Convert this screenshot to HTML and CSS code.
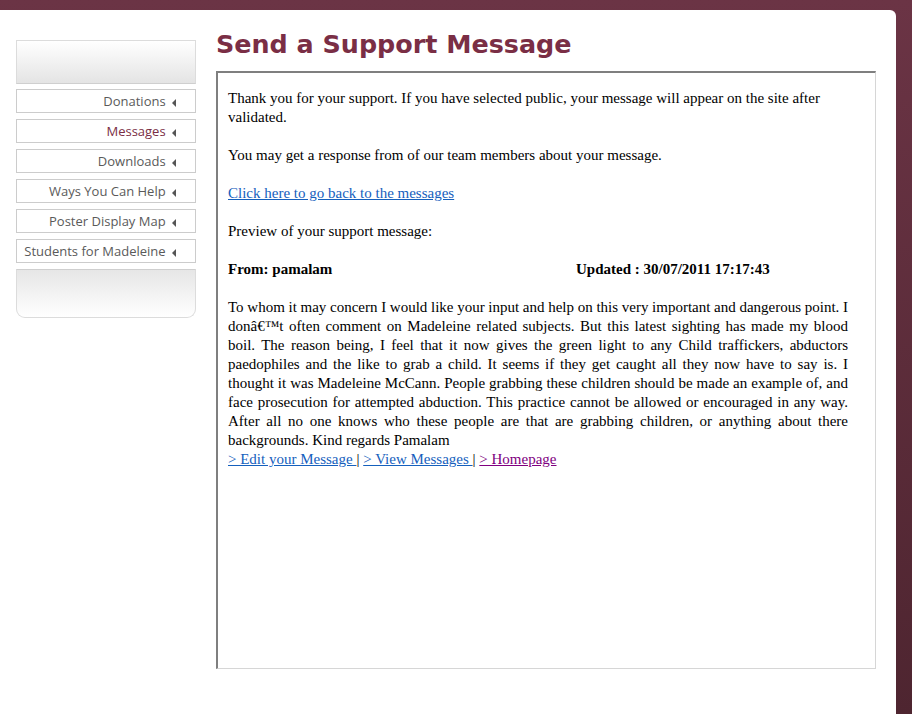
FILE: index.html
```html
<!DOCTYPE html>
<html lang="en">
<head>
    <meta charset="UTF-8">
    <title>Send a Support Message</title>
    <link rel="stylesheet" href="styles.css">
</head>
<body>
    <div class="page">
        <!-- Menu laterale -->
        <div class="sidebar">
            <div class="side-top"></div>
            <ul class="menu">
                <li><a href="#">Donations <span class="arrow"></span></a></li>
                <li><a href="#" class="current">Messages <span class="arrow"></span></a></li>
                <li><a href="#">Downloads <span class="arrow"></span></a></li>
                <li><a href="#">Ways You Can Help <span class="arrow"></span></a></li>
                <li><a href="#">Poster Display Map <span class="arrow"></span></a></li>
                <li><a href="#">Students for Madeleine <span class="arrow"></span></a></li>
            </ul>
            <div class="side-bottom"></div>
        </div>

        <!-- Contenuto -->
        <div class="content">
            <h1>Send a Support Message</h1>
            <div class="message-box">
                <p>Thank you for your support. If you have selected public, your message will appear on the site after validated.</p>
                <p>You may get a response from of our team members about your message.</p>
                <p><a href="#">Click here to go back to the messages</a></p>
                <p>Preview of your support message:</p>
                <div class="meta">
                    <span class="from">From: pamalam</span>
                    <span class="updated">Updated : 30/07/2011 17:17:43</span>
                </div>
                <p class="body-text"><span class="tight">To whom it may concern I would like your input and help on this very important and dangerous point. I</span> donâ€™t often comment on Madeleine related subjects. But this latest sighting has made my blood boil. The reason being, I feel that it now gives the green light to any Child traffickers, abductors paedophiles and the like to grab a child. It seems if they get caught all they now have to say is. I thought it was Madeleine McCann. People grabbing these children should be made an example of, and face prosecution for attempted abduction. This practice cannot be allowed or encouraged in any way. After all no one knows who these people are that are grabbing children, or anything about there backgrounds. Kind regards Pamalam</p>
                <div class="links">
                    <a href="#">&gt; Edit your Message </a> |
                    <a href="#">&gt; View Messages </a> |
                    <a href="#" class="visited">&gt; Homepage</a>
                </div>
            </div>
        </div>
    </div>
</body>
</html>
```

FILE: styles.css
```css
body {
    margin: 0;
    padding: 0;
    background: linear-gradient(to bottom, #6b3445, #4e2530);
    height: 714px;
    overflow: hidden;
}
.page {
    margin-top: 10px;
    width: 896px;
    height: 704px;
    background-color: #fff;
    border-top-right-radius: 6px;
    display: flex;
}
.sidebar {
    width: 180px;
    margin-left: 16px;
    padding-top: 30px;
}
.side-top {
    height: 42px;
    border: 1px solid #dcdcdc;
    border-bottom-color: #cfcfcf;
    background: linear-gradient(to bottom, #fff, #e4e4e4);
}
.menu {
    list-style: none;
    margin: 5px 0 0 0;
    padding: 0;
}
.menu li {
    margin-bottom: 6px;
}
.menu a {
    display: block;
    height: 22px;
    line-height: 22px;
    border: 1px solid #cccccc;
    padding-right: 19px;
    text-align: right;
    font-family: "Open Sans", sans-serif;
    font-size: 13px;
    color: #5a5a5a;
    text-decoration: none;
}
.menu a.current {
    color: #7a2e45;
}
.arrow {
    display: inline-block;
    width: 0;
    height: 0;
    margin-left: 3px;
    border-top: 4px solid transparent;
    border-bottom: 4px solid transparent;
    border-right: 4px solid #555;
    vertical-align: -1px;
}
.side-bottom {
    height: 47px;
    border: 1px solid #dcdcdc;
    border-top-color: #cfcfcf;
    border-radius: 0 0 9px 9px;
    background: linear-gradient(to bottom, #e6e6e6, #fff);
}
.content {
    margin-left: 20px;
    width: 660px;
}
h1 {
    font-family: "DejaVu Sans", Verdana, sans-serif;
    font-size: 25.4px;
    color: #7a2e45;
    margin: 19px 0 12px 0;
    line-height: 30px;
}
.message-box {
    box-sizing: border-box;
    height: 598px;
    border-top: 2px solid #7f7f7f;
    border-left: 2px solid #7f7f7f;
    border-right: 1px solid #d6d6d6;
    border-bottom: 1px solid #d6d6d6;
    padding: 16px 27px 0 10px;
    font-family: "Liberation Serif", "Times New Roman", serif;
    font-size: 15px;
    line-height: 19px;
    color: #000;
}
.message-box p {
    margin: 0 0 19px 0;
}
.message-box a {
    color: #1560bd;
}
.message-box a.visited {
    color: #800080;
}
.meta {
    display: flex;
    font-weight: bold;
    margin-bottom: 19px;
}
.from {
    width: 348px;
}
.message-box p.body-text {
    text-align: justify;
    margin-bottom: 0;
}
.tight {
    word-spacing: -0.6px;
}
```
